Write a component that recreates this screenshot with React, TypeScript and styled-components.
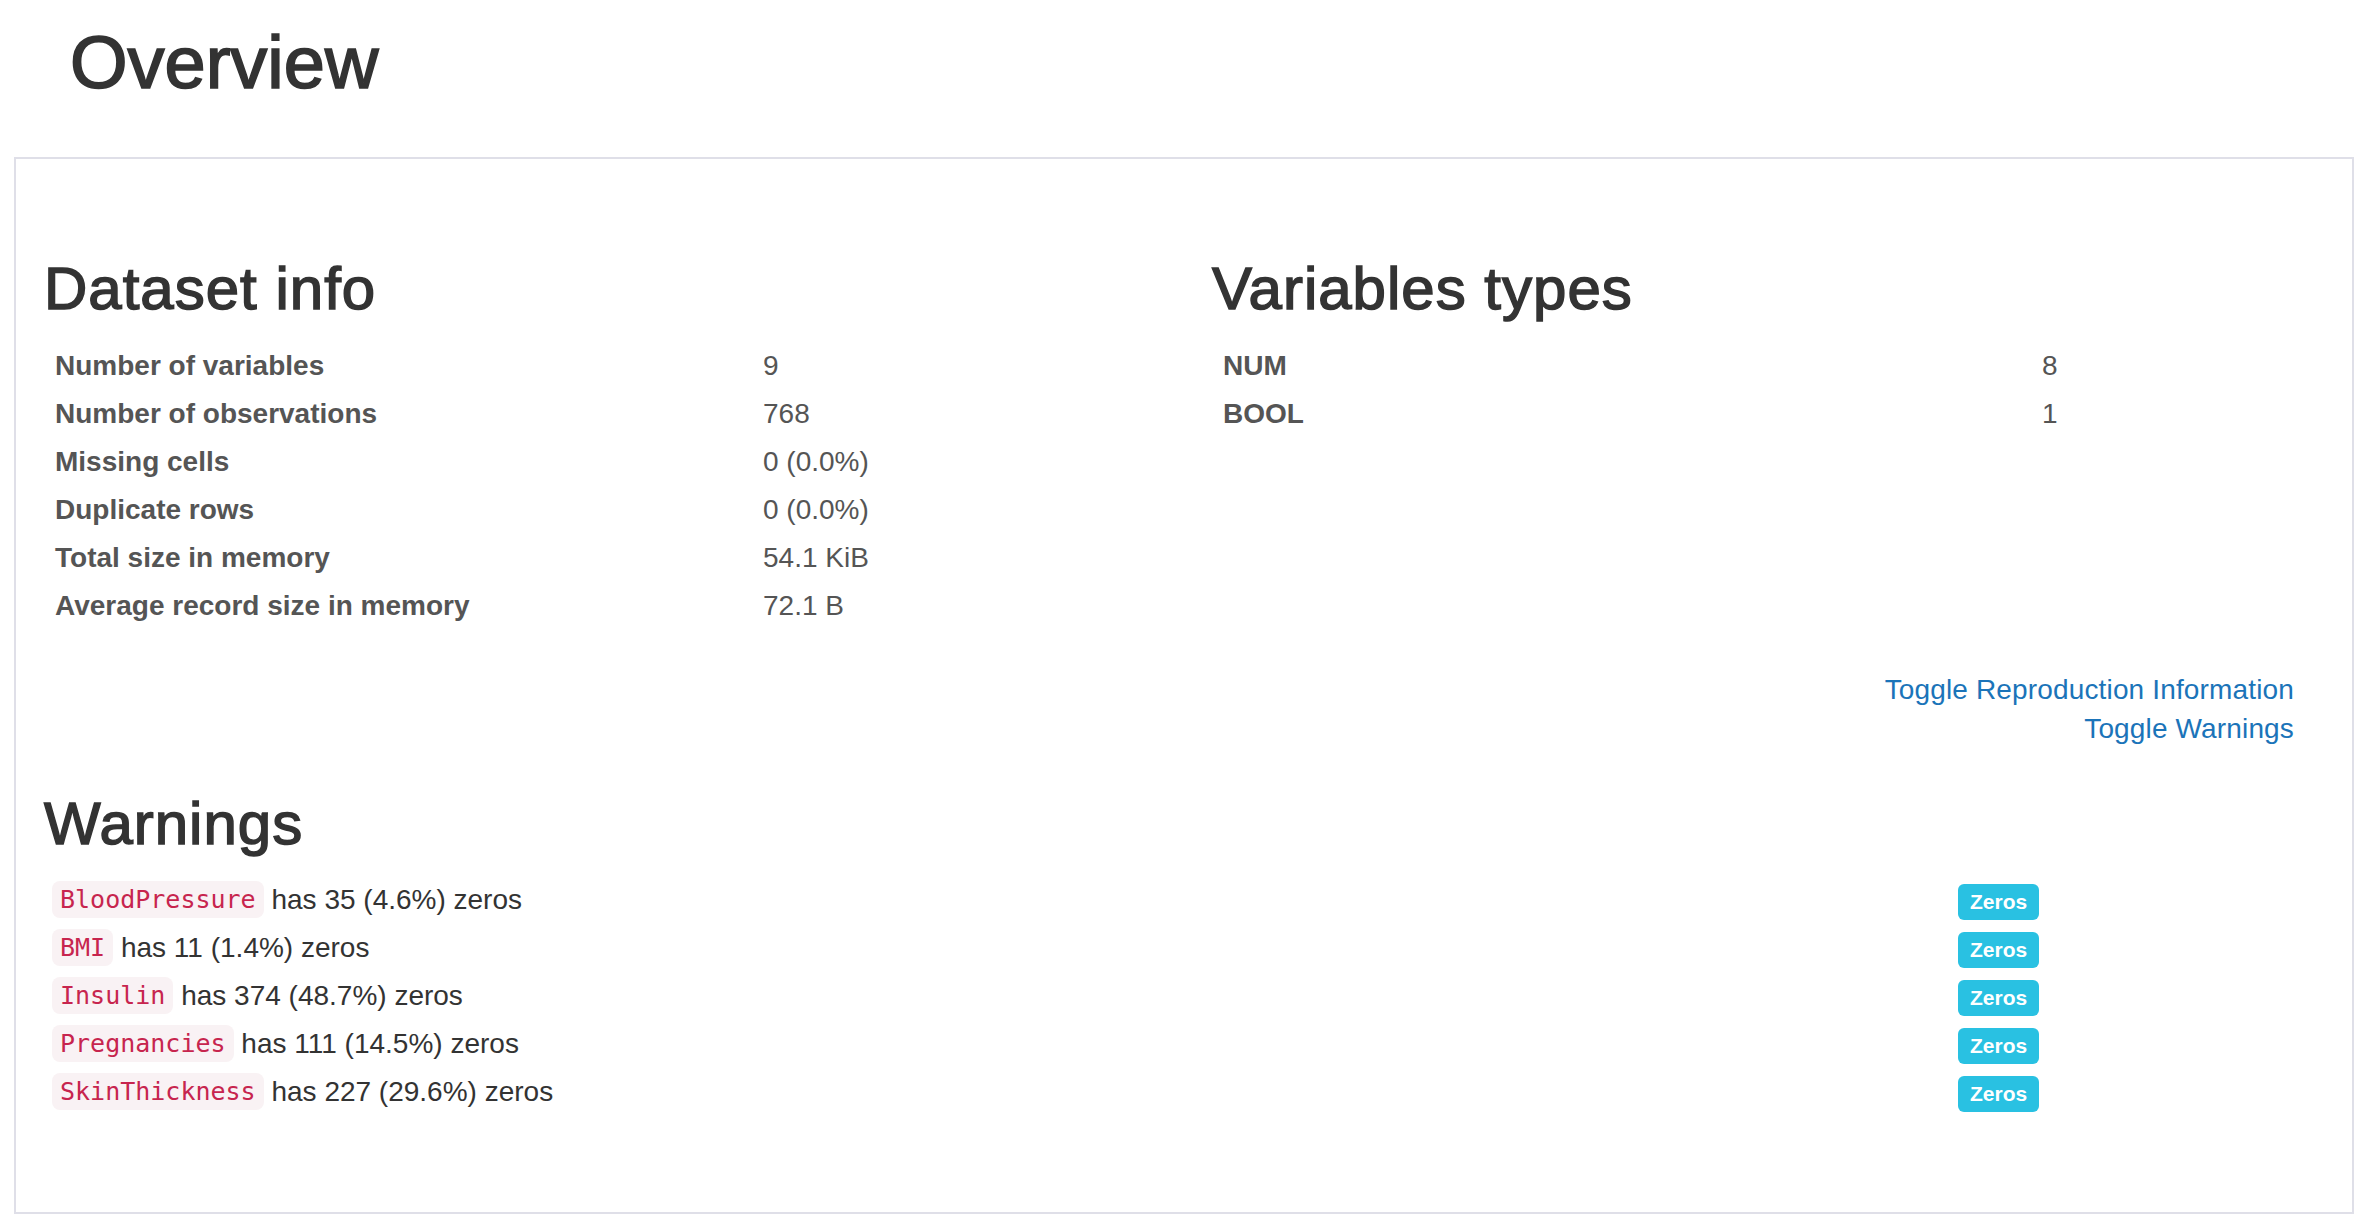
import { createGlobalStyle, styled } from "styled-components";

const datasetInfo: [string, string][] = [
	["Number of variables", "9"],
	["Number of observations", "768"],
	["Missing cells", "0 (0.0%)"],
	["Duplicate rows", "0 (0.0%)"],
	["Total size in memory", "54.1 KiB"],
	["Average record size in memory", "72.1 B"],
];

const variableTypes: [string, string][] = [
	["NUM", "8"],
	["BOOL", "1"],
];

const warnings = [
	{ name: "BloodPressure", text: "has 35 (4.6%) zeros" },
	{ name: "BMI", text: "has 11 (1.4%) zeros" },
	{ name: "Insulin", text: "has 374 (48.7%) zeros" },
	{ name: "Pregnancies", text: "has 111 (14.5%) zeros" },
	{ name: "SkinThickness", text: "has 227 (29.6%) zeros" },
];

export default function App() {
	return (
		<>
			<GlobalStyle />
			<Title>Overview</Title>
			<Panel>
				<Columns>
					<Column>
						<SectionTitle>Dataset info</SectionTitle>
						<StatsTable $labelWidth={711}>
							{datasetInfo.map(([label, value]) => (
								<StatRow key={label}>
									<StatLabel>{label}</StatLabel>
									<StatValue>{value}</StatValue>
								</StatRow>
							))}
						</StatsTable>
					</Column>
					<Column>
						<SectionTitle>Variables types</SectionTitle>
						<StatsTable $labelWidth={822}>
							{variableTypes.map(([label, value]) => (
								<StatRow key={label}>
									<StatLabel>{label}</StatLabel>
									<StatValue>{value}</StatValue>
								</StatRow>
							))}
						</StatsTable>
					</Column>
				</Columns>

				<Toggles>
					<ToggleLink href="#reproduction">Toggle Reproduction Information</ToggleLink>
					<ToggleLink href="#warnings">Toggle Warnings</ToggleLink>
				</Toggles>

				<WarningsSection>
					<SectionTitle $top={43}>Warnings</SectionTitle>
					<WarningList>
						{warnings.map((w) => (
							<WarningRow key={w.name}>
								<WarningText>
									<Code>{w.name}</Code> {w.text}
								</WarningText>
								<Label>Zeros</Label>
							</WarningRow>
						))}
					</WarningList>
				</WarningsSection>
			</Panel>
		</>
	);
}

const GlobalStyle = createGlobalStyle`
	html, body {
		margin: 0;
		padding: 0;
		background: #fff;
	}

	body {
		font-family: "Liberation Sans", Arial, Helvetica, sans-serif;
		font-size: 28px;
		color: #333;
	}
`;

// headings in the original are a medium weight, thicken the regular face a little
const Title = styled.h1`
	margin: 22px 0 54px;
	padding-left: 70px;
	font-size: 74px;
	font-weight: 400;
	line-height: 81px;
	color: #333;
	-webkit-text-stroke: 1.7px #333;
`;

const Panel = styled.div`
	margin: 0 16px 0 14px;
	border: 2px solid #dfdfe8;
	padding: 97px 0 96px;
`;

const Columns = styled.div`
	display: grid;
	grid-template-columns: 1fr 1fr;
`;

const Column = styled.div`
	padding: 0 28px;
`;

const SectionTitle = styled.h2<{ $top?: number }>`
	margin: ${(p) => p.$top ?? 0}px 0 20px;
	font-size: 60px;
	font-weight: 400;
	line-height: 66px;
	color: #333;
	letter-spacing: 1px;
	-webkit-text-stroke: 1.5px #333;
`;

const StatsTable = styled.div<{ $labelWidth: number }>`
	display: grid;
	grid-template-columns: ${(p) => p.$labelWidth}px 1fr;
`;

const StatRow = styled.div`
	display: contents;
`;

const StatLabel = styled.div`
	padding-left: 11px;
	font-weight: 700;
	line-height: 48px;
	color: #555;
`;

const StatValue = styled.div`
	padding-left: 8px;
	line-height: 48px;
	color: #555;
`;

const Toggles = styled.div`
	display: flex;
	flex-direction: column;
	align-items: flex-end;
	margin-top: 40px;
	padding-right: 58px;
`;

const ToggleLink = styled.a`
	line-height: 39px;
	color: #1b74b9;
	text-decoration: none;
	letter-spacing: 0.15px;
`;

const WarningsSection = styled.div`
	padding: 0 28px;
`;

const WarningList = styled.div`
	margin-top: -1px;
`;

const WarningRow = styled.div`
	display: grid;
	grid-template-columns: 1906px auto;
	align-items: center;
	height: 48px;
	padding-left: 8px;
`;

const WarningText = styled.div`
	line-height: 48px;
	color: #333;
	white-space: nowrap;
`;

const Code = styled.code`
	display: inline-block;
	padding: 4px 8px;
	font-family: "DejaVu Sans Mono", "Liberation Mono", monospace;
	font-size: 25px;
	line-height: 29px;
	color: #c7254e;
	background: #f9f2f4;
	border-radius: 8px;
	vertical-align: 1px;
`;

const Label = styled.span`
	justify-self: start;
	display: inline-block;
	padding: 0 12px;
	height: 36px;
	line-height: 36px;
	font-size: 21px;
	font-weight: 700;
	color: #fff;
	background: #29c1e2;
	border-radius: 6px;
	margin-top: 4px;
`;
